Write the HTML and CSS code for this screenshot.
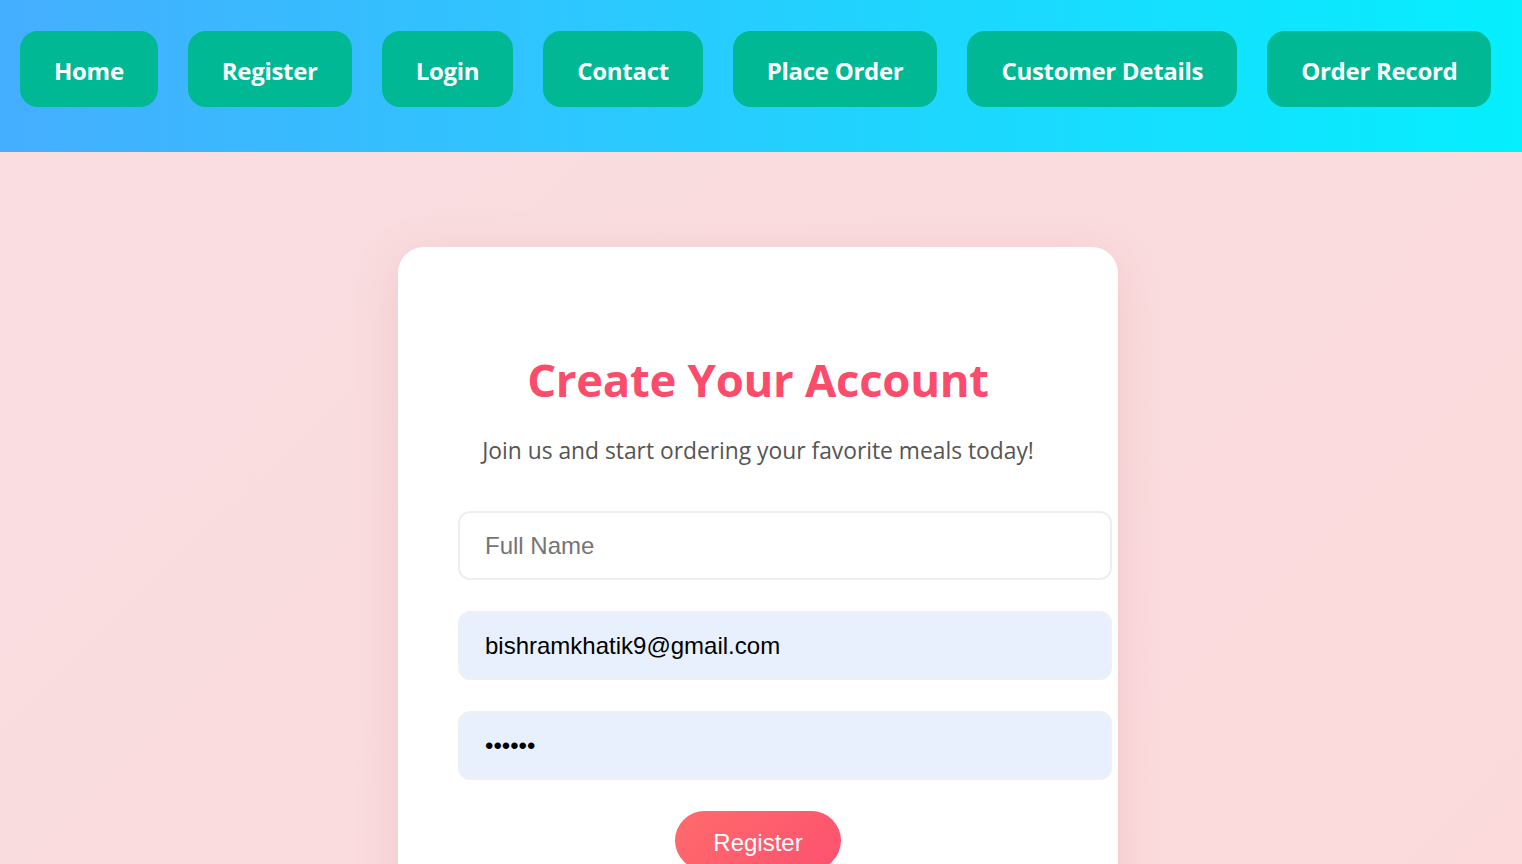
FILE: index.html
```html
<!DOCTYPE html>
<html lang="en">
<head>
<meta charset="utf-8">
<title>Register</title>
<link rel="stylesheet" href="styles.css">
</head>
<body>
<nav class="navbar">
  <a class="nav-btn" href="#">Home</a>
  <a class="nav-btn" href="#">Register</a>
  <a class="nav-btn" href="#">Login</a>
  <a class="nav-btn" href="#">Contact</a>
  <a class="nav-btn" href="#">Place Order</a>
  <a class="nav-btn" href="#">Customer Details</a>
  <a class="nav-btn" href="#">Order Record</a>
</nav>
<main class="page">
  <form class="card">
    <h2 class="title">Create Your Account</h2>
    <p class="subtitle">Join us and start ordering your favorite meals today!</p>
    <div class="fields">
      <input class="field" type="text" placeholder="Full Name">
      <input class="field filled" type="email" value="bishramkhatik9@gmail.com">
      <input class="field filled" type="password" value="123456">
    </div>
    <div class="actions">
      <button class="submit" type="button">Register</button>
    </div>
  </form>
</main>
</body>
</html>
```
FILE: styles.css
```css
* { box-sizing: content-box; }
html, body { margin: 0; padding: 0; }
body {
  height: 864px;
  background: linear-gradient(135deg, #f8dde0 0%, #fcdadc 100%);
  font-family: "Open Sans", "Noto Sans", sans-serif;
  overflow: hidden;
}
.navbar {
  display: flex;
  gap: 30px;
  padding: 31px 20px 45px;
  background: linear-gradient(to right, #45aefe 0%, #05effe 100%);
}
.nav-btn {
  display: flex;
  align-items: center;
  height: 76px;
  padding: 2px 34px 0;
  box-sizing: border-box;
  border-radius: 18px;
  background: #00b894;
  color: #fff;
  font-weight: 700;
  font-size: 24px;
  text-decoration: none;
  letter-spacing: -0.3px;
}
.page {
  display: flex;
  justify-content: center;
  padding-top: 95px;
  padding-right: 6px;
}
.card {
  width: 600px;
  padding: 60px 60px 40px;
  background: #fff;
  border-radius: 26px;
  box-shadow: 0 10px 40px rgba(220, 140, 150, 0.25);
}
.title {
  margin: 44px 0 0;
  text-align: center;
  color: #fc4c6c;
  font-size: 45.5px;
  line-height: 56px;
  font-weight: 700;
  letter-spacing: -0.3px;
}
.subtitle {
  margin: 30px 0 0;
  text-align: center;
  color: #555;
  font-size: 22.8px;
  line-height: 28px;
}
.fields {
  display: flex;
  flex-direction: column;
  gap: 31px;
  margin-top: 46px;
}
.field {
  width: 600px;
  padding: 19px 25px;
  border: 2px solid #eee;
  border-radius: 12px;
  font-family: "Liberation Sans", Arial, sans-serif;
  font-size: 24px;
  line-height: 27px;
  height: 27px;
  color: #000;
  background: #fff;
  outline: none;
}
.field::placeholder { color: #757575; }
.field.filled { background: #e8f0fe; border-color: #eef0f3; }
.actions {
  display: flex;
  justify-content: center;
  margin-top: 31px;
}
.submit {
  padding: 18px 38px 14px;
  border: none;
  border-radius: 30px;
  background: linear-gradient(135deg, #ff6b6b 0%, #fd5170 100%);
  color: #fff;
  font-family: "Liberation Sans", Arial, sans-serif;
  font-size: 24px;
  line-height: 27px;
}
```
